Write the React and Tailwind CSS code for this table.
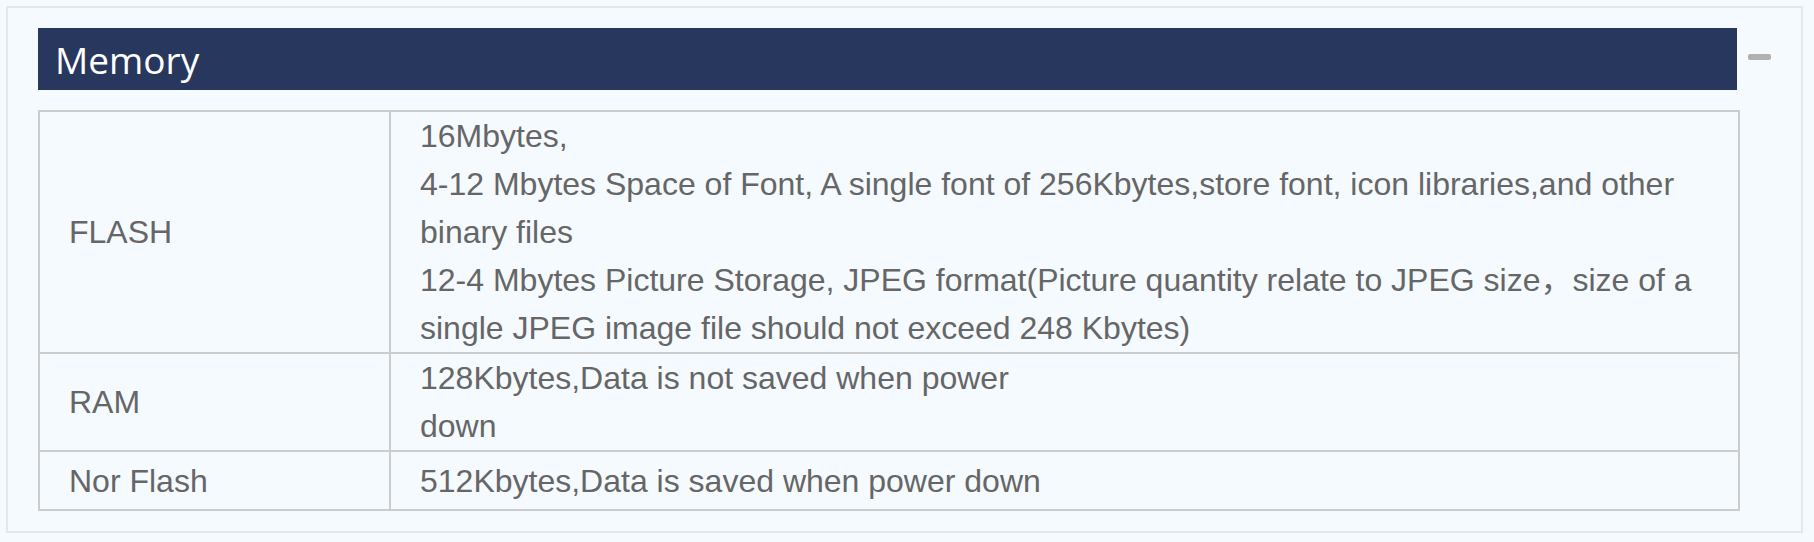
import React from "react";

export default function App() {
  const cellText = "text-[32px] leading-[48px] text-[#666666]";
  const font = { fontFamily: '"Liberation Sans", Arial, "Noto Sans CJK SC", sans-serif' };
  return (
    <div className="w-[1814px] h-[542px] bg-[#f5faff] p-[6px]">
      <div className="w-[1797px] h-[527px] border-2 border-[#e4e7eb] bg-[#f5faff] pl-[30px] pt-[20px]">
        <div className="flex items-start">
          <div className="w-[1699px] h-[62px] bg-[#27375e] flex items-center pl-[17px]">
            <span
              className="text-white text-[37px] leading-none"
              style={{ fontFamily: '"Open Sans", "Noto Sans", sans-serif' }}
            >
              Memory
            </span>
          </div>
          <div className="ml-[11px] mt-[26px] w-[23px] h-[6px] rounded-[2px] bg-[#b0b0b0]" />
        </div>
        <table
          className="mt-[20px] w-[1702px] border-collapse table-fixed border-2 border-[#cccccc]"
          style={font}
        >
          <colgroup>
            <col className="w-[351px]" />
            <col />
          </colgroup>
          <tbody>
            <tr>
              <td className={`border-2 border-[#cccccc] pl-[29px] align-middle ${cellText}`}>FLASH</td>
              <td className={`border-2 border-[#cccccc] pl-[29px] pr-[16px] ${cellText}`}>
                16Mbytes,
                <br />
                4-12 Mbytes Space of Font, A single font of 256Kbytes,store font, icon libraries,and other binary files
                <br />
                12-4 Mbytes Picture Storage, JPEG format(Picture quantity relate to JPEG size，size of a single JPEG image file should not exceed 248 Kbytes)
              </td>
            </tr>
            <tr>
              <td className={`border-2 border-[#cccccc] pl-[29px] align-middle ${cellText}`}>RAM</td>
              <td className={`border-2 border-[#cccccc] pl-[29px] ${cellText}`}>
                128Kbytes,Data is not saved when power
                <br />
                down
              </td>
            </tr>
            <tr>
              <td className={`border-2 border-[#cccccc] pl-[29px] h-[59px] align-middle ${cellText}`}>Nor Flash</td>
              <td className={`border-2 border-[#cccccc] pl-[29px] h-[59px] align-middle ${cellText}`}>
                512Kbytes,Data is saved when power down
              </td>
            </tr>
          </tbody>
        </table>
      </div>
    </div>
  );
}
